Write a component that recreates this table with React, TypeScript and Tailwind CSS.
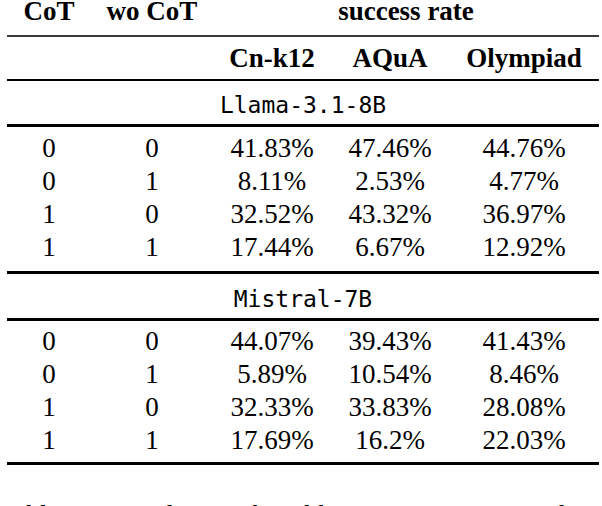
const serif = 'font-["Liberation_Serif","Times_New_Roman",serif]';
const mono = 'font-["DejaVu_Sans_Mono","Liberation_Mono",monospace]';
const cols = 'grid grid-cols-[84px_122px_118px_118px_150px]';

type Row = [string, string, string, string, string];

const llama: Row[] = [
  ['0', '0', '41.83%', '47.46%', '44.76%'],
  ['0', '1', '8.11%', '2.53%', '4.77%'],
  ['1', '0', '32.52%', '43.32%', '36.97%'],
  ['1', '1', '17.44%', '6.67%', '12.92%'],
];

const mistral: Row[] = [
  ['0', '0', '44.07%', '39.43%', '41.43%'],
  ['0', '1', '5.89%', '10.54%', '8.46%'],
  ['1', '0', '32.33%', '33.83%', '28.08%'],
  ['1', '1', '17.69%', '16.2%', '22.03%'],
];

function DataRows({ rows, className }: { rows: Row[]; className: string }) {
  return (
    <div className={className}>
      {rows.map((r, i) => (
        <div key={i} className={`${cols} h-[33px] text-[27px] leading-[33px] text-center`}>
          {r.map((c, j) => (
            <div key={j}>{c}</div>
          ))}
        </div>
      ))}
    </div>
  );
}

export default function App() {
  return (
    <div className={`w-[602px] h-[506px] overflow-hidden bg-white text-black ${serif}`}>
      <div className="ml-[7px] w-[592px]">
        {/* group header */}
        <div className={`${cols} h-[35px] text-[27px] leading-[26px] -mt-[2px] mb-[2px] font-bold text-center`}>
          <div>CoT</div>
          <div>wo CoT</div>
          <div className="col-span-3">success rate</div>
        </div>
        <div className="h-[2px] bg-[#3a3a3a]" />

        <div className={`${cols} h-[42px] text-[27px] leading-[42px] font-bold text-center`}>
          <div />
          <div />
          <div>Cn-k12</div>
          <div>AQuA</div>
          <div>Olympiad</div>
        </div>
        <div className="h-[2px] bg-black" />

        <div className={`h-[43px] pt-[5px] text-center text-[23px] leading-[38px] ${mono}`}>Llama-3.1-8B</div>
        <div className="h-[3px] bg-black" />
        <DataRows rows={llama} className="pt-[5px] pb-[7px]" />
        <div className="h-[3px] bg-black" />

        <div className={`h-[44px] pt-[6px] text-center text-[23px] leading-[38px] ${mono}`}>Mistral-7B</div>
        <div className="h-[3px] bg-black" />
        <DataRows rows={mistral} className="pt-[4px] pb-[5px]" />
        <div className="h-[3px] bg-black" />
      </div>

      <p className="mt-[34px] whitespace-nowrap text-[27px] leading-[33px] [word-spacing:8px]">
        Table 1: We design the ablation experiments of Buddy to
      </p>
    </div>
  );
}
